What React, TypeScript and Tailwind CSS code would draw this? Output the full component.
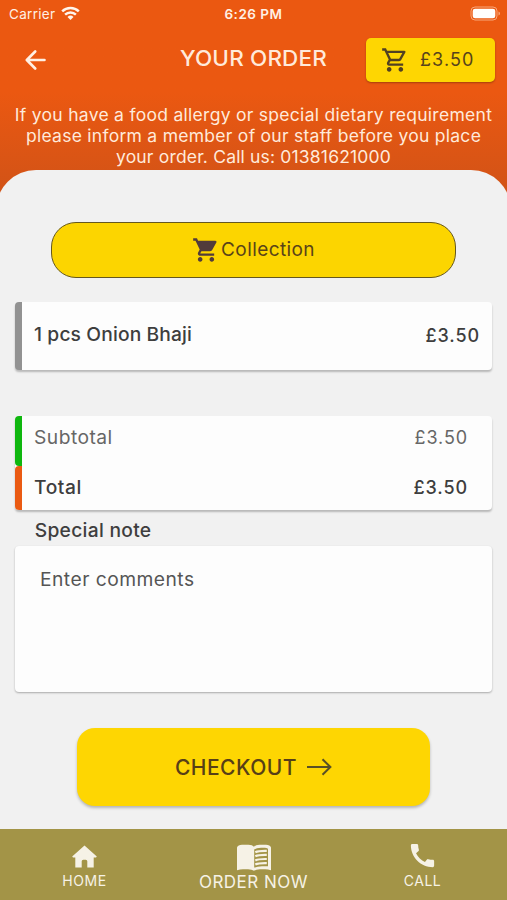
import type { ReactNode } from "react";
import { MdCall, MdOutlineShoppingCart, MdShoppingCart } from "react-icons/md";

function StatusBar() {
  return (
    <div className="grid h-7 grid-cols-3 items-center text-[13.5px] leading-none text-[#fff0e4]">
      <div className="flex items-center gap-[6px] pl-[9px]">
        <span className="pt-px tracking-[0.3px]">Carrier</span>
        <svg className="-mt-[2px]" width="19" height="15" viewBox="0 0 19 15" fill="none" stroke="#fff5ec" strokeWidth="2.5">
          <path d="M1.2 5.4a12 12 0 0 1 16.6 0" />
          <path d="M4.1 8.6a7.8 7.8 0 0 1 10.8 0" />
          <path d="M9.5 14l-3-3.1a4.4 4.4 0 0 1 6 0z" fill="#fff5ec" stroke="none" />
        </svg>
      </div>
      <span className="pt-px text-center text-[13.5px] font-semibold tracking-[0.5px]">6:26 PM</span>
      <div className="flex justify-end pr-[6px]">
        <svg className="-mt-[2px]" width="31" height="15" viewBox="0 0 31 15">
          <rect x="1" y="1" width="26" height="13" rx="4" fill="none" stroke="#f8a77d" strokeWidth="1" />
          <rect x="2.7" y="2.7" width="22.6" height="9.6" rx="2.4" fill="#fff" />
          <path d="M28.5 5.5v4q1.5-.6 1.5-2t-1.5-2z" fill="#f8a77d" />
        </svg>
      </div>
    </div>
  );
}

function House() {
  return (
    <svg className="mb-[3px]" width="25" height="23" viewBox="0 0 25 23" fill="currentColor">
      <path d="M12.500 .5 24.800 11.600 24 12.500H21.700V22.500H15.300V16.300Q15.300 14.700 13.700 14.700H11.300Q9.700 14.700 9.700 16.300V22.500H3.300V12.500H1L.2 11.600Z" />
    </svg>
  );
}

function OpenBook() {
  return (
    <svg width="34" height="27" viewBox="0 0 34 27" fill="none" stroke="currentColor">
      <path d="M0 3.500Q1 .8 5 .8H11.500Q15.500 .8 17 2.800Q18.500 .8 22.500 .8H29Q33 .8 34 3.500V26.200Q31 25.200 28 25.200H23Q19 25.200 17 26.700Q15 25.200 11 25.200H6Q3 25.200 0 26.200Z" fill="currentColor" stroke="none" />
      <path d="M17.200 5.500Q19.500 3.700 24 3.700H28Q31 3.700 31 5.500V22.200H25Q20 22.200 17.200 23.800Z" fill="#a39447" stroke="none" />
      <path d="M18.300 8.200Q21.500 6.600 29.800 6.800M18.300 12.300Q21.500 10.700 29.800 10.900M18.300 16.400Q21.500 14.800 29.800 15M18.300 20.500Q21.500 18.900 29.800 19.100" strokeWidth="2.200" />
    </svg>
  );
}

function NavItem({ children, label, className }: { children: ReactNode; label: string; className: string }) {
  return (
    <div className="flex flex-1 flex-col items-center text-[#f6f2e6]">
      <div className="flex h-[42px] items-end justify-center">{children}</div>
      <span className={className}>{label}</span>
    </div>
  );
}

export default function App() {
  return (
    <div className="flex h-[900px] w-[507px] flex-col overflow-hidden bg-[#f1f1f1] font-['Inter',sans-serif] text-[#3e3e3e]">
      <header className="h-[230px] shrink-0 bg-linear-to-b from-[#eb5811] from-40% to-[#c85118] text-[#ffeadb]">
        <StatusBar />
        <div className="flex h-[63px] items-center pr-[12px] pl-[25px]">
          <svg width="21" height="20" viewBox="0 0 21 20" fill="none" stroke="#fff0e4" strokeWidth="2.6" strokeLinecap="round" strokeLinejoin="round">
            <path d="M10.2 1.5 1.8 10l8.4 8.5M2 10h17.5" />
          </svg>
          <h1 className="ml-[134px] w-[148px] origin-left scale-x-[1.045] pb-[2px] text-[21.5px] font-medium whitespace-nowrap tracking-[0.15px]">YOUR ORDER</h1>
          <div className="ml-auto flex h-11 w-[129px] items-center rounded-[5px] bg-[#fed602] pl-[15px] text-[#57431c] shadow-[0_1px_2px_rgba(0,0,0,0.3)]">
            <MdOutlineShoppingCart size={28} className="text-[#514022]" />
            <span className="ml-[11px] text-[18px] tracking-[1.1px]">£3.50</span>
          </div>
        </div>
        <p className="origin-center scale-x-[1.03] pt-[13.5px] text-center text-[17px] leading-[21px]">
          <span className="block whitespace-nowrap tracking-[0.27px]">If you have a food allergy or special dietary requirement</span>
          <span className="block whitespace-nowrap tracking-[0.26px]">please inform a member of our staff before you place</span>
          <span className="block whitespace-nowrap tracking-[0.17px]">your order. Call us: 01381621000</span>
        </p>
      </header>

      <main className="relative -mx-1 -mt-[60px] flex flex-1 flex-col rounded-t-[40px] bg-[#f1f1f1] px-[19px] pt-[52px]">
        <button className="mx-[36px] flex h-[56px] items-center justify-center rounded-[25px] border-[1.5px] border-[#65581f] bg-[#fcd500] text-[19px] text-[#594319]">
          <MdShoppingCart size={28} className="text-[#513b3b]" />
          <span className="ml-px tracking-[0.4px]">Collection</span>
        </button>

        <section className="mt-[24px] flex h-[68px] items-center justify-between overflow-hidden rounded-[4px] border-l-[7px] border-[#929292] bg-[#fdfdfd] pr-[12px] pl-[12px] text-[18px] font-medium shadow-[0_2px_2px_rgba(0,0,0,0.24)]">
          <span className="-mt-[2px] origin-left scale-x-[1.04] text-[18.5px] tracking-[0.12px]">1 pcs Onion Bhaji</span>
          <span className="-mt-[2px] tracking-[0.9px]">£3.50</span>
        </section>

        <section className="mt-[46px] flex h-[94px] flex-col rounded-[4px] bg-[#fdfdfd] text-[18px] shadow-[0_2px_2px_rgba(0,0,0,0.24)]">
          <div className="flex h-[50px] justify-between rounded-l-[4px] border-l-[7px] border-[#0fb70f] pt-[8px] pr-[24px] pl-[12px] text-[#666]">
            <span className="origin-left scale-x-[1.04] text-[18.5px] tracking-[0.45px]">Subtotal</span>
            <span className="tracking-[0.9px]">£3.50</span>
          </div>
          <div className="flex h-[44px] justify-between rounded-l-[4px] border-l-[7px] border-[#ea5a12] pt-[8px] pr-[24px] pl-[12px] font-medium">
            <span className="origin-left scale-x-[1.04] text-[18.5px] tracking-[0.55px]">Total</span>
            <span className="tracking-[0.9px]">£3.50</span>
          </div>
        </section>

        <h2 className="mt-[7px] origin-left scale-x-[1.04] pl-[19px] text-[18.5px] leading-[27px] font-medium tracking-[0.26px]">Special note</h2>
        <div className="mt-[2px] h-[146px] rounded-[4px] bg-[#fdfdfd] pt-[20px] pl-[25px] text-[18.5px] text-[#555] shadow-[0_1px_2px_rgba(0,0,0,0.3)]">
          <span className="inline-block origin-left scale-x-[1.04] tracking-[0.45px]">Enter comments</span>
        </div>

        <button className="mx-[62px] mt-[36px] flex h-[78px] items-center justify-center rounded-[18px] bg-[#fed602] text-[21px] font-medium text-[#573f17] shadow-[0_2px_3px_rgba(0,0,0,0.25)]">
          <span className="pt-[2px] tracking-[0.5px]">CHECKOUT</span>
          <svg className="ml-[10px]" width="25" height="18" viewBox="0 0 25 18" fill="none" stroke="#595026" strokeWidth="2">
            <path d="M0 9h23M15.500 1.200 23.400 9l-7.900 7.800" />
          </svg>
        </button>
      </main>

      <nav className="relative flex h-[71px] shrink-0 bg-[#a39447]">
        <NavItem label="HOME" className="mt-[1px] text-[14px] leading-[18px] tracking-[0.6px]"><House /></NavItem>
        <NavItem label="ORDER NOW" className="mt-[1px] text-[17px] leading-[21px] tracking-[0.5px]"><OpenBook /></NavItem>
        <NavItem label="CALL" className="mt-[1px] text-[14px] leading-[18px] tracking-[0.5px]"><MdCall size={31} /></NavItem>
      </nav>
    </div>
  );
}
